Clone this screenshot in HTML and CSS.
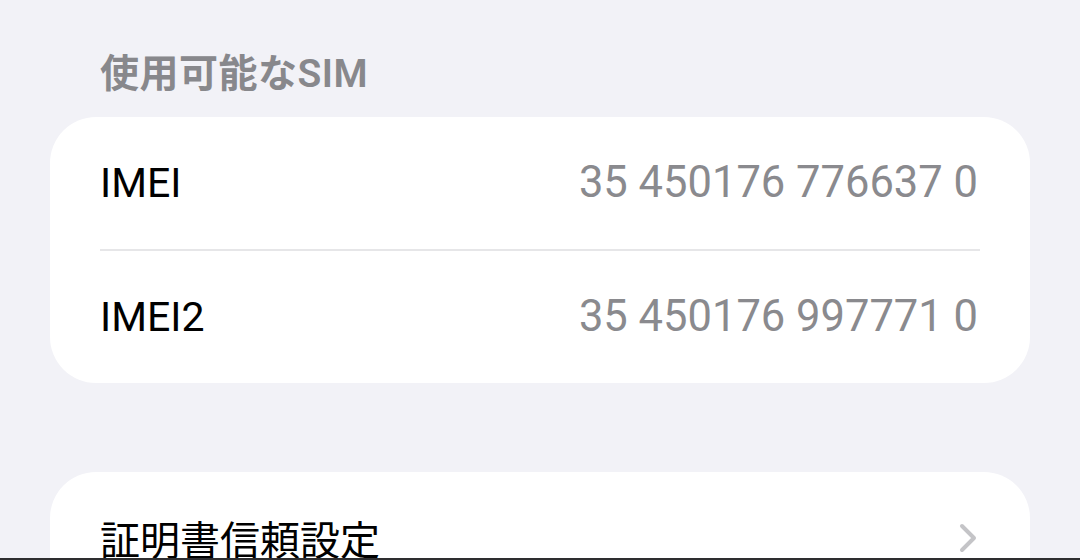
FILE: index.html
```html
<!DOCTYPE html>
<html lang="ja">
<head>
<meta charset="utf-8">
<title>情報</title>
<link rel="stylesheet" href="styles.css">
</head>
<body>
<div class="screen">
  <main class="content">
    <h2 class="section-header">使用可能なSIM</h2>
    <section class="group">
      <div class="row">
        <span class="label">IMEI</span>
        <span class="value">35 450176 776637 0</span>
      </div>
      <div class="divider"></div>
      <div class="row">
        <span class="label">IMEI2</span>
        <span class="value">35 450176 997771 0</span>
      </div>
    </section>
    <section class="group group-next">
      <div class="row link">
        <span class="label label-ja">証明書信頼設定</span>
        <svg class="chevron" viewBox="0 0 20 32" width="20" height="32" aria-hidden="true">
          <path d="M4 4 L16 16 L4 28" fill="none" stroke="#c4c4c7" stroke-width="4" stroke-linecap="round" stroke-linejoin="round"/>
        </svg>
      </div>
    </section>
  </main>
  <div class="bottom-edge"></div>
</div>
</body>
</html>
```

FILE: styles.css
```css
html, body {
  margin: 0;
  padding: 0;
}

body {
  background: #f2f2f7;
  font-family: Roboto, "Noto Sans CJK JP", sans-serif;
  color: #000;
}

.screen {
  height: 560px;
  overflow: hidden;
  display: grid;
  grid-template-rows: 1fr 2px;
}

.content {
  overflow: hidden;
  display: flex;
  flex-direction: column;
}

.section-header {
  margin: 55px 0 23px 100px;
  font-family: Roboto, "Noto Sans CJK JP", sans-serif;
  font-size: 39px;
  line-height: 39px;
  font-weight: 600;
  color: #88888c;
  letter-spacing: 0.5px;
}

.group {
  margin: 0 50px;
  background: #fff;
  border-radius: 46px;
  display: flex;
  flex-direction: column;
  flex-shrink: 0;
}

.group-next {
  margin-top: 89px;
}

.row {
  height: 132px;
  display: flex;
  align-items: center;
  justify-content: space-between;
  padding: 0 52px 0 50px;
}

.label {
  font-size: 41px;
  line-height: 1;
  color: #000;
}

.label-ja {
  font-family: "Noto Sans CJK JP", sans-serif;
  font-size: 40px;
}

.value {
  font-size: 43.5px;
  line-height: 1;
  color: #8a8a8e;
}

.divider {
  height: 2px;
  margin: 0 50px;
  background: #e6e6e8;
}

.link {
  padding-right: 52px;
}

.chevron {
  display: block;
}

.bottom-edge {
  background: #2e2e30;
}
```
